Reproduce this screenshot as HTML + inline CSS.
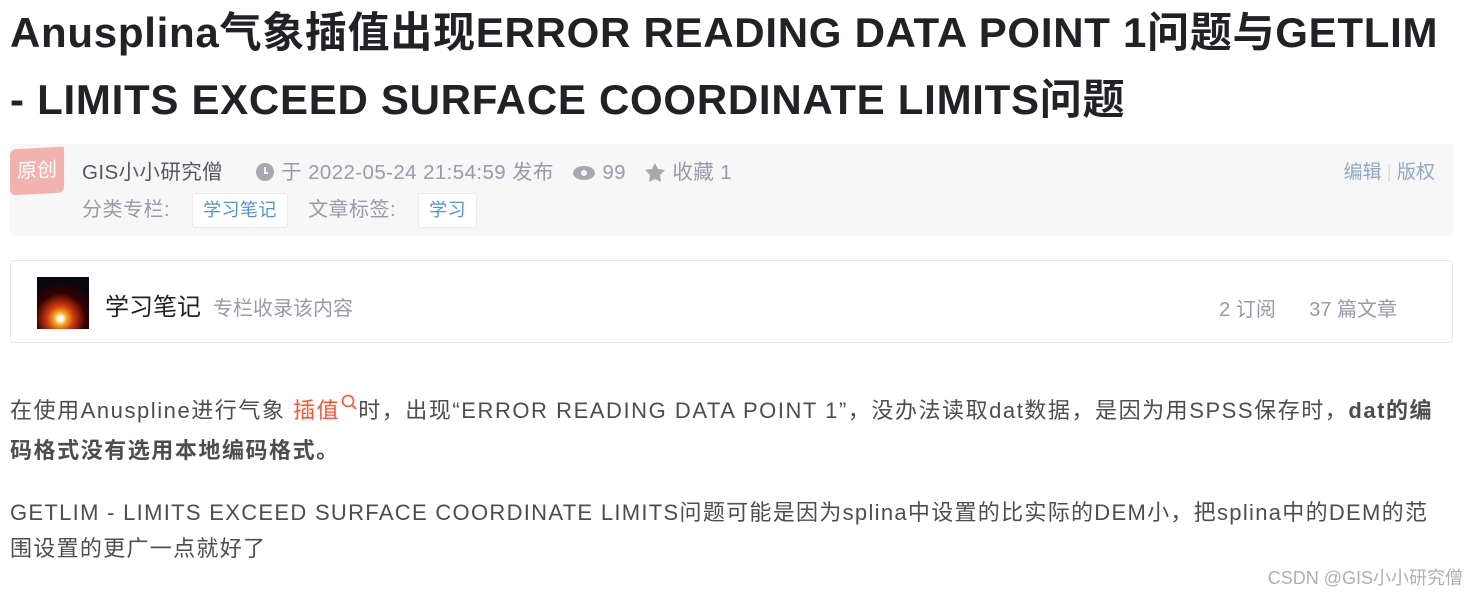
<!DOCTYPE html>
<html><head><meta charset="utf-8"><style>
*{margin:0;padding:0;box-sizing:border-box}
body{width:1477px;height:593px;background:#fff;font-family:"Liberation Sans","Noto Sans CJK SC",sans-serif;position:relative;overflow:hidden}
h1{position:absolute;left:10px;top:-1px;width:1470px;font-size:42px;line-height:67px;font-weight:bold;color:#222226;letter-spacing:0.72px;white-space:nowrap}
.meta{position:absolute;left:10px;top:144px;width:1443px;height:92px;background:#f7f7f7;border-radius:4px}
.yc{position:absolute;left:0;top:4px;width:54px;height:46px;background:#f2b3ae;color:#fff;font-size:20px;line-height:46px;text-align:center;border-radius:6px 2px 6px 6px;transform:skewY(-3deg)}
.r1{position:absolute;left:72px;top:11px;font-size:20.5px;color:#999aaa;white-space:nowrap;letter-spacing:0.4px}
.r1 .a{color:#555666;margin-right:32px}
.r2{position:absolute;left:72px;top:49px;font-size:20px;color:#999aaa;white-space:nowrap;letter-spacing:0.5px}
.tag{display:inline-block;background:#fff;border:1px solid #eaeaef;border-radius:3px;color:#5094d5;padding:0 10px;height:35px;line-height:33px;margin:0 20px 0 22px;vertical-align:middle;font-size:18px}
.ed{position:absolute;right:18px;top:13px;font-size:19px;color:#8fa8c8}
.card{position:absolute;left:10px;top:260px;width:1443px;height:83px;border:1px solid #e8e8ed;border-radius:4px}
.ava{position:absolute;left:26px;top:16px;width:52px;height:52px;background:radial-gradient(circle at 45% 80%,#fff 0 5%,#f7b020 12%,#d03a10 26%,#300 50%,#080810 75%);}
.ct{position:absolute;left:94px;top:26px;font-size:24px;color:#222}
.ct span{font-size:20px;color:#999aaa;margin-left:12px}
.cs{position:absolute;right:55px;top:32px;font-size:20px;color:#999aaa}
p{position:absolute;left:10px;width:1470px;font-size:22px;color:#4d4d4d;letter-spacing:1.3px;white-space:nowrap}
.p1{top:391px;line-height:40px;letter-spacing:1.55px}
.p2{top:495px;line-height:36px}
.hl{color:#fc5531}
.wm{position:absolute;right:14px;top:564px;font-size:18px;color:#b0b0b0}
</style></head><body>
<h1>Anusplina气象插值出现ERROR READING DATA POINT 1问题与GETLIM<br>- LIMITS EXCEED SURFACE COORDINATE LIMITS问题</h1>
<div class="meta">
<div class="yc">原创</div>
<div class="r1"><span class="a">GIS小小研究僧</span><svg width="20" height="20" viewBox="0 0 20 20" style="vertical-align:-3px"><circle cx="10" cy="10" r="9" fill="#a8a8b3"/><path d="M10 5v6h3" stroke="#f7f7f7" stroke-width="2" fill="none"/></svg> 于 2022-05-24 21:54:59 发布 &nbsp;&nbsp;<svg width="24" height="16" viewBox="0 0 24 16" style="vertical-align:-2px"><ellipse cx="12" cy="8" rx="11" ry="7" fill="#a8a8b3"/><circle cx="12" cy="8" r="3" fill="#f7f7f7"/></svg> 99 &nbsp;&nbsp;<svg width="22" height="20" viewBox="0 0 22 20" style="vertical-align:-3px"><path d="M11 1l3 6 7 1-5 5 1 7-6-3-6 3 1-7-5-5 7-1z" fill="#a8a8b3"/></svg> 收藏 1</div>
<div class="r2">分类专栏:<span class="tag">学习笔记</span>文章标签:<span class="tag">学习</span></div>
<div class="ed">编辑 <span style="color:#ddd">|</span> 版权</div>
</div>
<div class="card">
<div class="ava"></div>
<div class="ct">学习笔记<span>专栏收录该内容</span></div>
<div class="cs">2 订阅 &nbsp;&nbsp;&nbsp;&nbsp; 37 篇文章</div>
</div>
<p class="p1">在使用Anuspline进行气象 <span class="hl">插值</span><svg width="18" height="18" viewBox="0 0 18 18" style="vertical-align:6px"><circle cx="8" cy="7" r="5.5" stroke="#fc5531" stroke-width="1.6" fill="none"/><path d="M12 11l4 4" stroke="#fc5531" stroke-width="1.8"/></svg>时，出现“ERROR READING DATA POINT 1”，没办法读取dat数据，是因为用SPSS保存时，<b>dat的编<br>码格式没有选用本地编码格式。</b></p>
<p class="p2">GETLIM - LIMITS EXCEED SURFACE COORDINATE LIMITS问题可能是因为splina中设置的比实际的DEM小，把splina中的DEM的范<br>围设置的更广一点就好了</p>
<div class="wm">CSDN @GIS小小研究僧</div>
</body></html>
